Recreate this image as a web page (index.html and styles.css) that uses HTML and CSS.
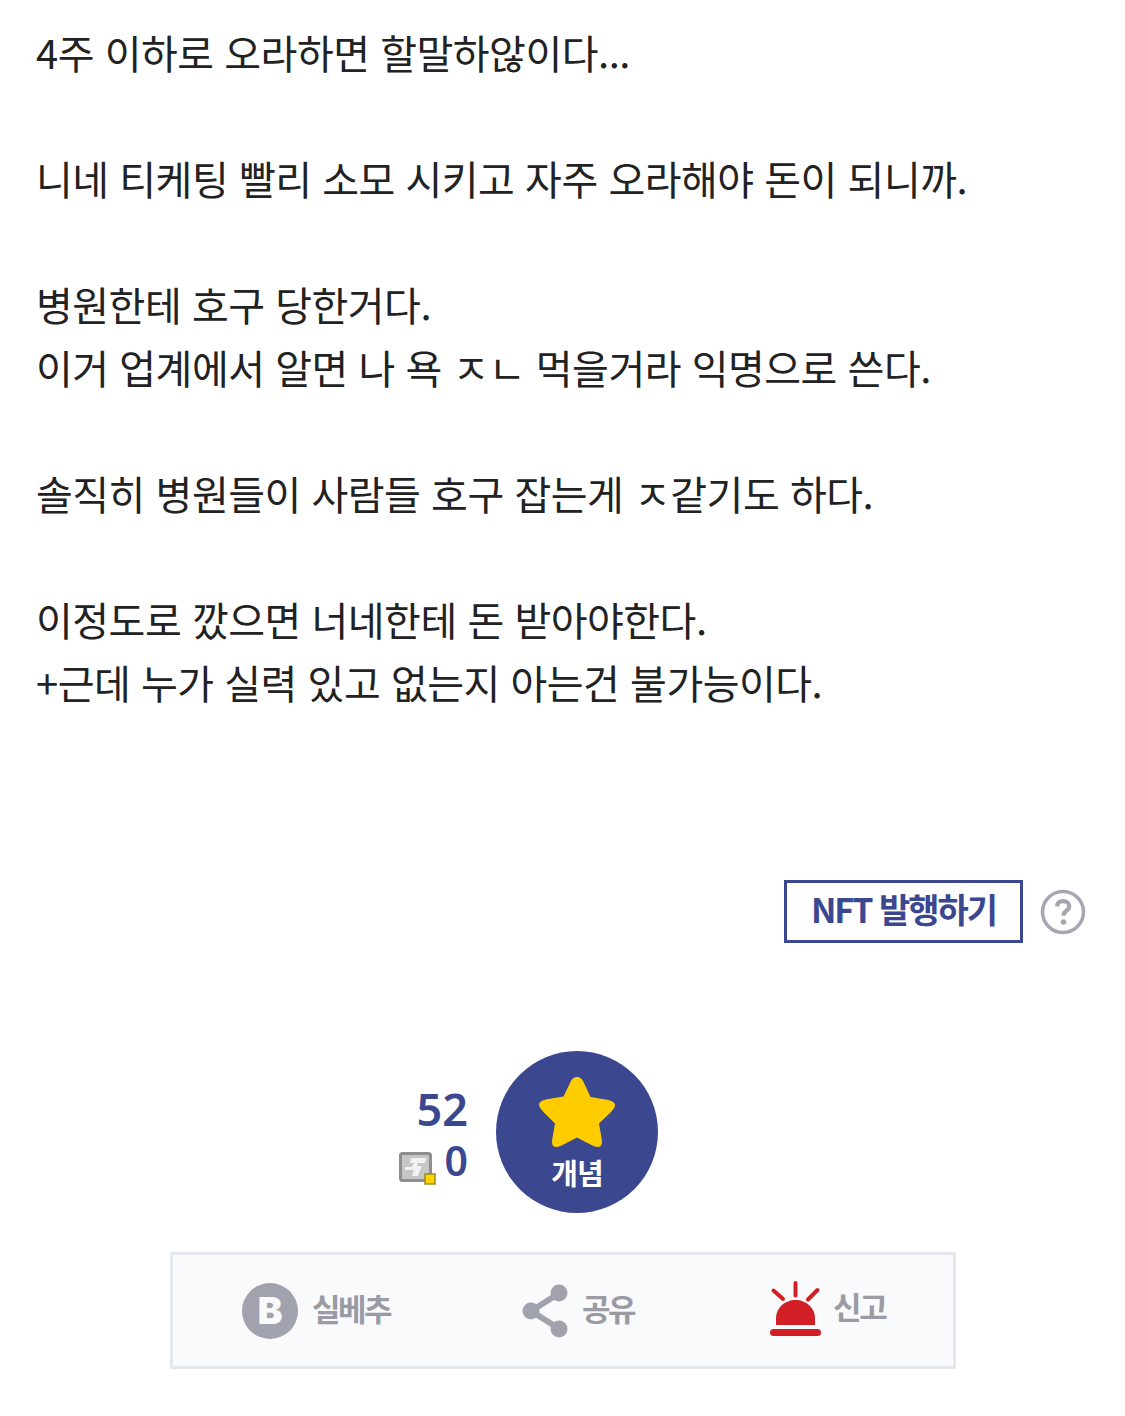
FILE: index.html
```html
<!DOCTYPE html>
<html lang="ko">
<head>
<meta charset="utf-8">
<title>개념글</title>
<link rel="stylesheet" href="styles.css">
</head>
<body>
<main class="page">
  <article class="post">
    <p>4주 이하로 오라하면 할말하않이다...</p>
    <p class="blank">&nbsp;</p>
    <p>니네 티케팅 빨리 소모 시키고 자주 오라해야 돈이 되니까.</p>
    <p class="blank">&nbsp;</p>
    <p>병원한테 호구 당한거다.</p>
    <p>이거 업계에서 알면 나 욕 ㅈㄴ 먹을거라 익명으로 쓴다.</p>
    <p class="blank">&nbsp;</p>
    <p>솔직히 병원들이 사람들 호구 잡는게 ㅈ같기도 하다.</p>
    <p class="blank">&nbsp;</p>
    <p>이정도로 깠으면 너네한테 돈 받아야한다.</p>
    <p>+근데 누가 실력 있고 없는지 아는건 불가능이다.</p>
  </article>

  <div class="nft-row">
    <a class="nft-btn">NFT 발행하기</a>
    <svg class="help" viewBox="0 0 46 46" aria-label="도움말">
      <circle cx="23" cy="23" r="20.500" fill="#fff" stroke="#a5a6b2" stroke-width="3.500"/>
      <path d="M17 17.500c.3-3.500 2.700-5.300 6.200-5.300 3.600 0 6 2 6 5 0 2.300-1.200 3.500-3 4.800-1.900 1.300-2.700 2.300-2.700 4.700" fill="none" stroke="#a5a6b2" stroke-width="4.200"/>
      <circle cx="23.500" cy="33" r="2.800" fill="#a5a6b2"/>
    </svg>
  </div>

  <div class="vote">
    <div class="counts">
      <div class="count-main">52</div>
      <div class="count-sub">
        <svg class="fix-icon" viewBox="0 0 37 33" aria-hidden="true">
          <rect x="1.500" y="1.500" width="30" height="27" rx="2" fill="#c6c6c6" stroke="#8e8e8e" stroke-width="3"/>
          <path d="M12 6h15l-1 5h-7l-1 3h5l-2 4-2 6h-6l2-6H6v-3h7l2-4h-4z" fill="#f2f2f2"/>
          <rect x="26" y="22" width="10" height="10" fill="#ffd400" stroke="#9a8a20" stroke-width="1.500"/>
        </svg>
        <span>0</span>
      </div>
    </div>
    <button class="star-btn">
      <svg class="star" viewBox="0 0 76 72" aria-hidden="true">
        <path d="M38 1c3.500 0 5.500 2.500 7 6l6.500 14 15 2.500c5 .8 9.500 2.500 9.500 5.500 0 2.500-2 5-5 8L60 47.500l2.700 15.500c.6 4 .3 8-3.700 8-2.500 0-5-1.200-8.500-3L38 61.500 25.500 68c-3.500 1.800-6 3-8.500 3-4 0-4.300-4-3.700-8L16 47.500 5 36.500c-3-3-5-5.500-5-8 0-3 4.500-4.700 9.500-5.500l15-2.500L31 7c1.500-3.500 3.500-6 7-6z" fill="#ffcc00"/>
      </svg>
      <span>개념</span>
    </button>
  </div>

  <div class="actions">
    <a class="action act-b">
      <span class="b-icon">B</span>
      <span class="label">실베추</span>
    </a>
    <a class="action act-share">
      <svg class="share" viewBox="0 0 46 54" aria-hidden="true">
        <path d="M36 10 9 27l27 17" fill="none" stroke="#a0a2ae" stroke-width="6"/>
        <circle cx="37" cy="9" r="8.500" fill="#a0a2ae"/>
        <circle cx="9" cy="27" r="8.500" fill="#a0a2ae"/>
        <circle cx="37" cy="45" r="8.500" fill="#a0a2ae"/>
      </svg>
      <span class="label">공유</span>
    </a>
    <a class="action act-report">
      <svg class="siren" viewBox="0 0 52 56" aria-hidden="true">
        <path d="M6 44v-7c0-10 9-18 19.500-18S45 27 45 37v7z" fill="#d21f26"/>
        <rect x="0" y="48" width="51" height="7" rx="3.500" fill="#d21f26"/>
        <path d="M25.500 2v12.500M3.500 9.500l9.500 8.500M47.500 9l-9.500 9.500" stroke="#d21f26" stroke-width="4" stroke-linecap="round"/>
      </svg>
      <span class="label label-high">신고</span>
    </a>
  </div>
</main>
</body>
</html>
```

FILE: styles.css
```css
* { box-sizing: border-box; }
html, body { margin: 0; padding: 0; background: #fff; }
body { font-family: "Noto Sans CJK KR", "Noto Sans", sans-serif; color: #222; }
.page { width: 1125px; height: 1416px; overflow: hidden; padding-top: 21px; }
.post { padding-left: 36px; font-size: 40px; line-height: 63px; letter-spacing: -0.5px; }
.post p { margin: 0; height: 63px; white-space: nowrap; }
.nft-row { display: flex; align-items: center; justify-content: flex-end; margin-top: 166px; padding-right: 39px; gap: 17px; }
.nft-btn { display: flex; align-items: center; justify-content: center; width: 239px; height: 63px; border: 3px solid #3b4890; color: #3b4890; font-size: 34px; font-weight: 700; letter-spacing: -2px; padding-bottom: 7px; }
.help { width: 46px; height: 46px; }
.vote { display: flex; align-items: center; margin-top: 108px; padding-left: 398px; gap: 28px; }
.counts { width: 70px; display: flex; flex-direction: column; align-items: flex-end; color: #3b4890; font-family: "Noto Sans", sans-serif; font-weight: 600; font-size: 45px; padding-top: 5px; }
.count-main { line-height: 50px; }
.count-sub { display: flex; align-items: flex-start; justify-content: space-between; width: 100%; height: 52px; line-height: 52px; font-size: 41px; padding-left: 1px; }
.fix-icon { width: 37px; height: 33px; margin-top: 18px; }
.star-btn { width: 162px; height: 162px; border: 0; border-radius: 50%; background: #3b4890; color: #fff; padding: 25px 0 0; font: 700 29px/40px "Noto Sans CJK KR", sans-serif; letter-spacing: -1px; display: flex; flex-direction: column; align-items: center; }
.star { width: 76px; height: 72px; margin-bottom: 4px; }
.actions { display: flex; margin: 39px 0 0 170px; width: 786px; height: 117px; border: 3px solid #e4e6f0; background: #f9fafc; color: #9a9ba5; font-size: 31px; font-weight: 700; letter-spacing: -2.500px; }
.action { display: flex; align-items: center; }
.label { padding-bottom: 6px; }
.label-high { padding-bottom: 10px; }
.act-b { margin-left: 69px; gap: 14px; }
.b-icon { width: 56px; height: 56px; border-radius: 50%; background: #a0a2ae; color: #f9fafc; font-family: Inter, sans-serif; font-size: 37px; font-weight: 900; display: flex; align-items: center; justify-content: center; letter-spacing: 0; }
.act-share { margin-left: 132px; gap: 14px; }
.share { width: 46px; height: 54px; }
.act-report { margin-left: 136px; gap: 11px; }
.siren { width: 52px; height: 56px; margin-top: -3px; }
```
